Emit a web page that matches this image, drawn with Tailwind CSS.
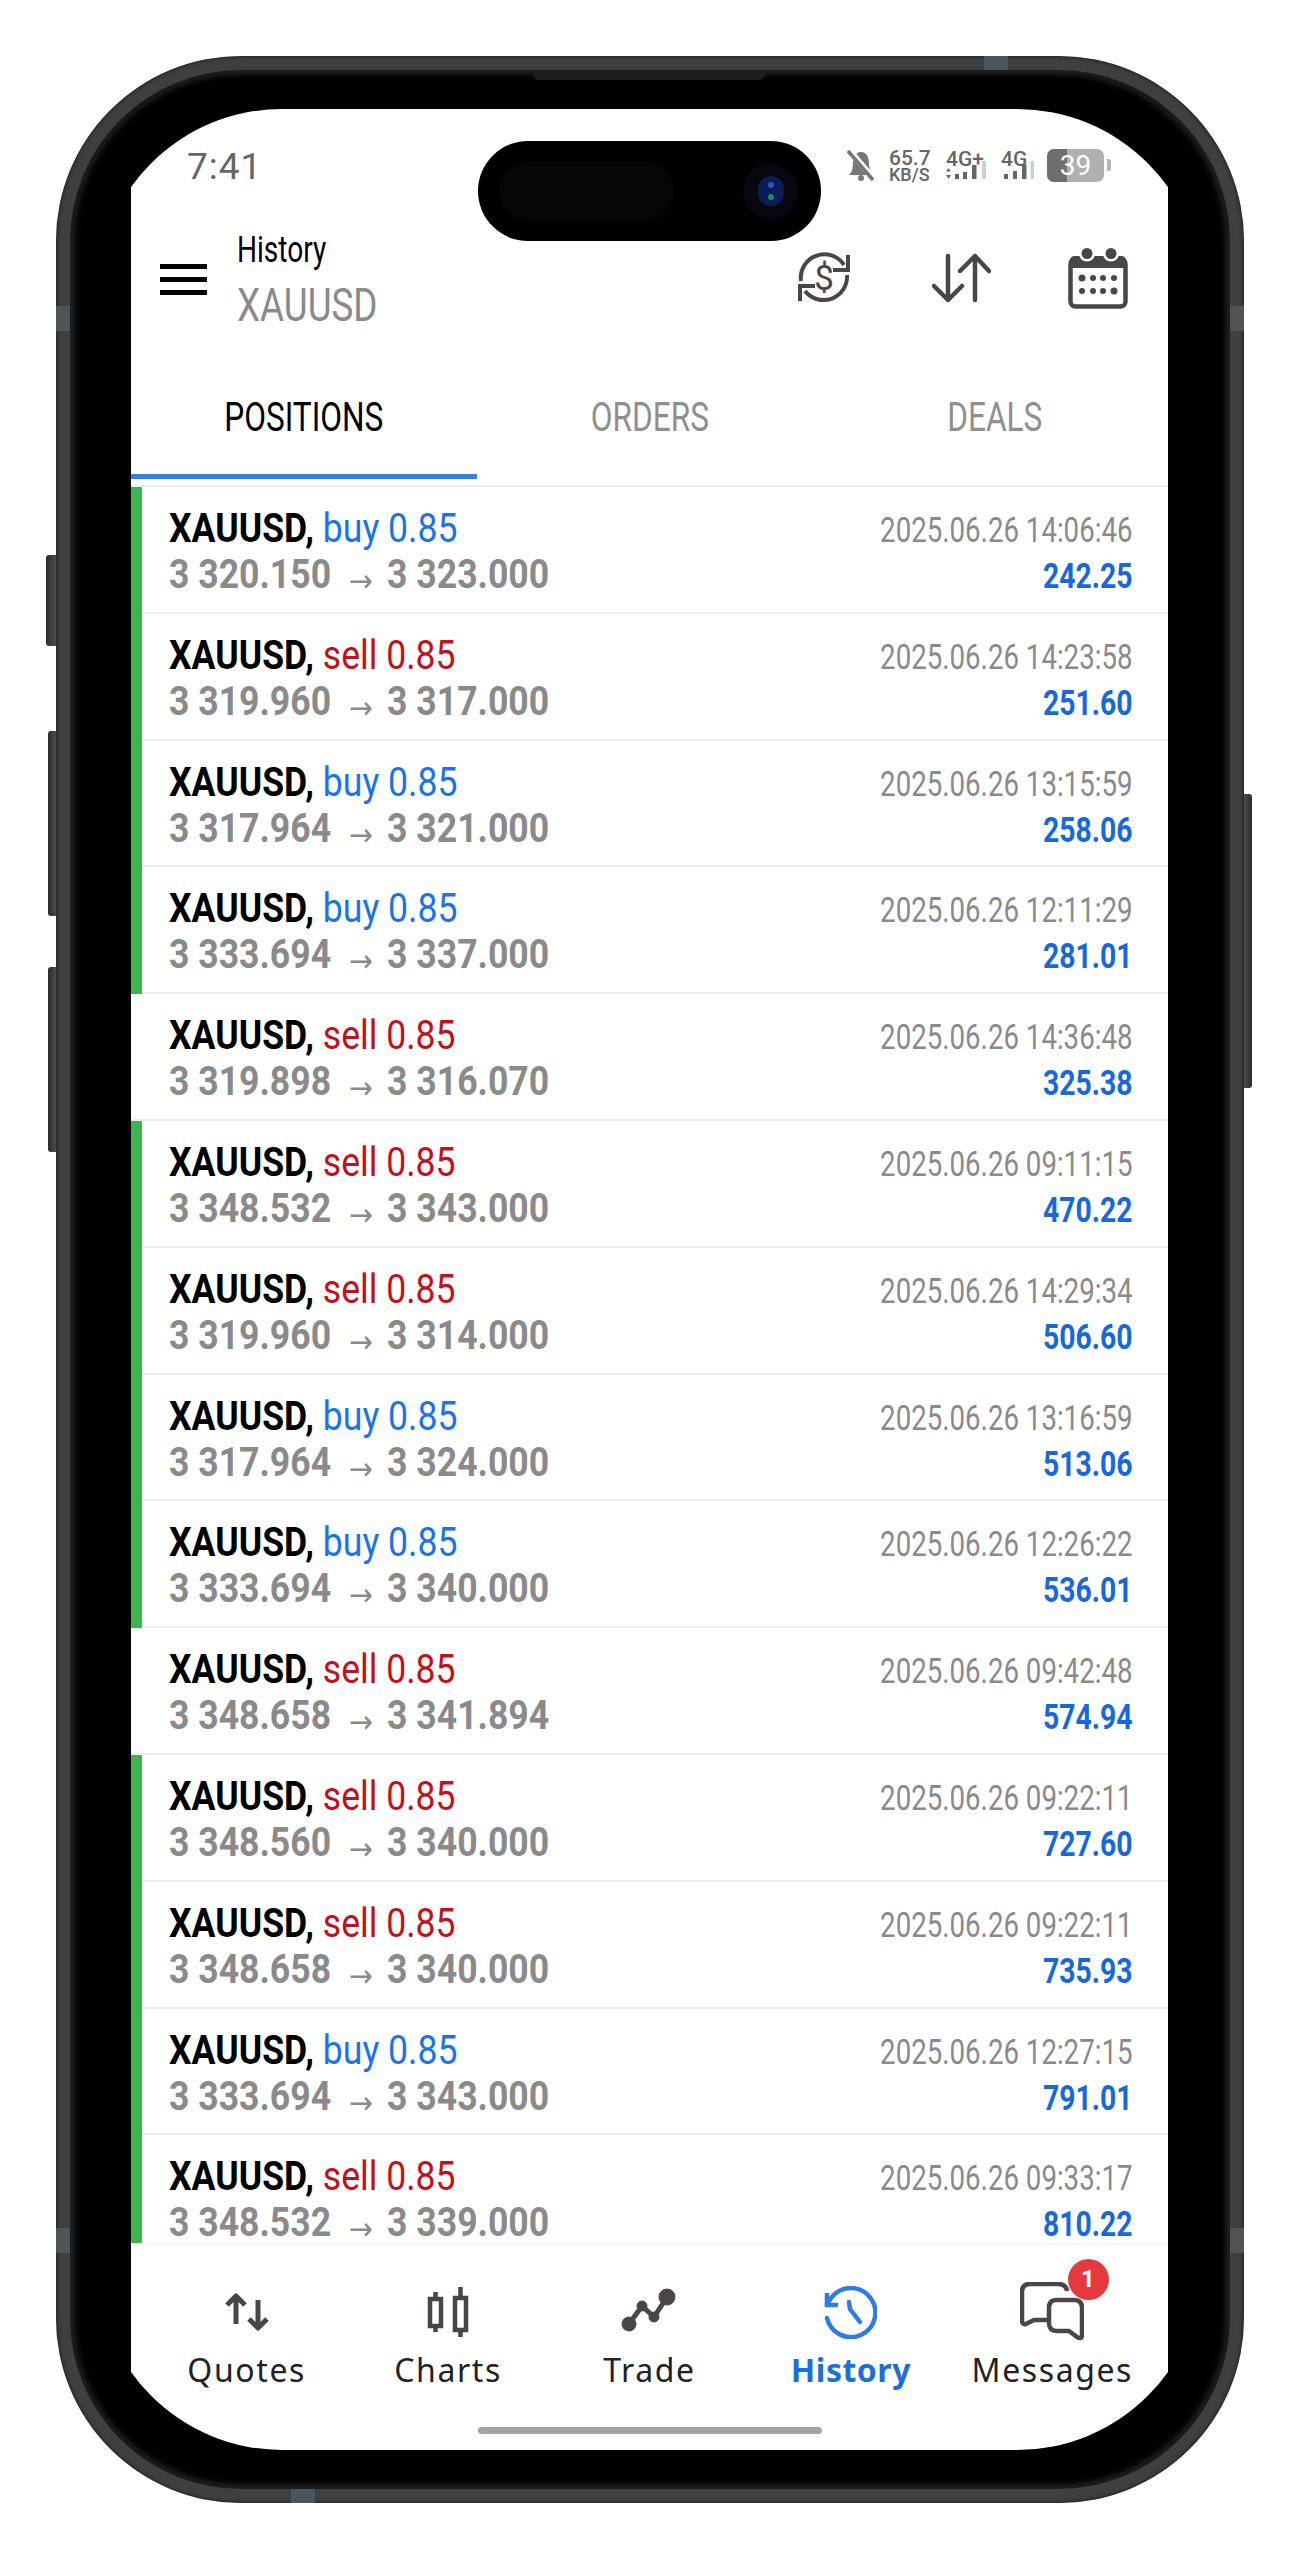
<!DOCTYPE html>
<html lang="en">
<head>
  <meta charset="UTF-8" />
  <meta name="viewport" content="width=device-width, initial-scale=1.0" />
  <title>History - XAUUSD</title>
  <script src="https://cdn.jsdelivr.net/npm/@tailwindcss/browser@4"></script>
</head>
<body class="bg-white font-[Roboto,sans-serif] overflow-hidden h-[2560px]">
  <!-- Phone frame -->
  <div class="relative mt-[56px] ml-[56px] w-[1188px] h-[2447px] rounded-[185px] bg-[#3d3f40] p-[14px] shadow-[inset_0_0_4px_#141516]">
    <!-- side buttons -->
    <div class="absolute left-[-10px] top-[499px] w-[10px] h-[91px] rounded-l-[3px] bg-gradient-to-r from-[#2a2c2d] to-[#4a4c4e]"></div>
    <div class="absolute left-[-8px] top-[675px] w-[8px] h-[185px] rounded-l-[3px] bg-gradient-to-r from-[#2a2c2d] to-[#4a4c4e]"></div>
    <div class="absolute left-[-8px] top-[911px] w-[8px] h-[185px] rounded-l-[3px] bg-gradient-to-r from-[#2a2c2d] to-[#4a4c4e]"></div>
    <div class="absolute right-[-8px] top-[738px] w-[8px] h-[294px] rounded-r-[3px] bg-gradient-to-l from-[#2a2c2d] to-[#4a4c4e]"></div>
    <!-- antenna bands -->
    <div class="absolute left-[928px] top-0 w-[24px] h-[14px] bg-[#505456]"></div>
    <div class="absolute left-[235px] bottom-0 w-[24px] h-[14px] bg-[#505456]"></div>
    <div class="absolute left-0 top-[250px] w-[14px] h-[25px] bg-[#505456]"></div>
    <div class="absolute right-0 top-[250px] w-[14px] h-[25px] bg-[#505456]"></div>
    <div class="absolute left-0 top-[2172px] w-[14px] h-[25px] bg-[#505456]"></div>
    <div class="absolute right-0 top-[2172px] w-[14px] h-[25px] bg-[#505456]"></div>

    <div class="relative h-full rounded-[171px] bg-black pt-[37px] pb-[37px] pl-[59px] pr-[60px] border-2 border-[#1b1d1e] shadow-[inset_0_0_9px_#3a3a3a]">
      <!-- speaker -->
      <div class="absolute left-[461px] top-0 w-[232px] h-[8px] rounded-b-[6px] bg-[#1c1d1e]"></div>

      <!-- straight crop of the screen -->
      <div class="relative h-full overflow-hidden">
        <div class="relative h-full -mx-[34px] px-[34px] rounded-[185px] overflow-hidden bg-white flex flex-col">

          <!-- Dynamic island -->
          <div class="absolute left-[381px] top-[32px] w-[343px] h-[100px] rounded-full bg-black flex items-center">
            <div class="ml-[21px] w-[175px] h-[59px] rounded-full bg-[#060606]"></div>
            <div class="ml-[69px] w-[55px] h-[55px] rounded-full bg-[#0a0610] flex items-center justify-center">
              <div class="w-[26px] h-[30px] rounded-full bg-[#0c1c55] flex flex-col items-center justify-center gap-[6px]">
                <div class="w-[6px] h-[6px] rounded-full bg-[#3550c0]"></div>
                <div class="w-[6px] h-[6px] rounded-full bg-[#1c8a66]"></div>
              </div>
            </div>
          </div>

          <!-- Status bar -->
          <div class="h-[115px] shrink-0 flex justify-between text-[#666666]">
            <div class="pl-[56px] pt-[38px] text-[37px] leading-[40px] tracking-[1px]">7:41</div>
            <div class="flex items-start pr-[57px] pt-[40px]">
              <svg class="w-[28px] h-[33px]" viewBox="0 0 28 33">
                <path d="M14 3C8 3 6 9 6 15L5 22L2 26H26L23 22L22 15C22 9 20 3 14 3Z" fill="#777"/>
                <circle cx="14" cy="29" r="3" fill="#777"/>
                <path d="M2 1L26 29" stroke="#fff" stroke-width="6"/>
                <path d="M1 2L26 31" stroke="#777" stroke-width="3.5"/>
              </svg>
              <div class="ml-[14px] w-[39px] font-medium">
                <div class="text-[21px] leading-[18px]">65.7</div>
                <div class="text-[18px] leading-[15px] whitespace-nowrap">KB/S</div>
              </div>
              <div class="ml-[18px] w-[40px] font-medium">
                <div class="pt-[4px] text-[21px] leading-[12px]">4G+</div>
                <svg class="mt-[-4px] w-[40px] h-[18px]" viewBox="0 0 40 18" fill="#666666">
                  <path d="M2.5 7L5 10.5H0ZM2.5 18L0 14H5Z"/>
                  <rect x="9" y="13" width="4" height="5"/>
                  <rect x="17" y="11" width="4" height="7"/>
                  <rect x="26" y="4" width="4.5" height="14"/>
                  <rect x="36" y="0" width="4" height="18" fill="#cfcfcf"/>
                </svg>
              </div>
              <div class="ml-[15px] w-[33px] font-medium">
                <div class="pt-[4px] text-[21px] leading-[12px]">4G</div>
                <svg class="mt-[-4px] ml-[3px] w-[30px] h-[18px]" viewBox="0 0 30 18" fill="#666666">
                  <rect x="0" y="13" width="4" height="5"/>
                  <rect x="9" y="10" width="4" height="8"/>
                  <rect x="18" y="4" width="4.5" height="14"/>
                  <rect x="26.500" y="0" width="3.5" height="18" fill="#cfcfcf"/>
                </svg>
              </div>
              <div class="ml-[13px] w-[57px] h-[33px] rounded-[7px] overflow-hidden flex bg-[#b0b0b0] relative">
                <div class="w-[20px] bg-[#6e6e6e]"></div>
                <div class="absolute inset-0 text-center text-white text-[28px] leading-[33px]">39</div>
              </div>
              <div class="ml-[3px] mt-[10px] w-[4px] h-[12px] rounded-r-[2px] bg-[#b5b5b5]"></div>
            </div>
          </div>

          <!-- Header -->
          <div class="h-[110px] shrink-0 flex items-center">
            <div class="ml-[29px] w-[47px] flex flex-col gap-[8px]">
              <div class="h-[5px] bg-black"></div>
              <div class="h-[5px] bg-black"></div>
              <div class="h-[5px] bg-black"></div>
            </div>
            <div class="ml-[30px] flex-1 min-w-0">
              <div class="origin-left scale-x-[.78] whitespace-nowrap text-[36px] leading-[52px] text-black">History</div>
              <div class="origin-left scale-x-[.8] whitespace-nowrap text-[46px] leading-[58px] text-[#8a8a8a]">XAUUSD</div>
            </div>
            <div class="flex items-center pr-[40px] -mt-[2px]">
              <!-- swap -->
              <svg class="w-[56px] h-[56px]" viewBox="0 0 56 56" fill="none" stroke="#4a4646" stroke-width="4">
                <path d="M5 31A23.500 23.500 0 0 1 48 15"/>
                <path d="M52 5V20H37"/>
                <path d="M51 25A23.500 23.500 0 0 1 9 41"/>
                <path d="M4 51V36H19"/>
                <text x="28" y="40" text-anchor="middle" font-family="Roboto" font-size="35" fill="#4a4646" stroke="none">$</text>
              </svg>
              <!-- sort -->
              <svg class="ml-[80px] w-[59px] h-[50px]" viewBox="0 0 59 50" fill="none" stroke="#4a4646" stroke-width="4.500" stroke-linecap="round" stroke-linejoin="round">
                <path d="M16 3V47M2 33L16 47L30 33"/>
                <path d="M43 47V3M28 18L43 3L57 18"/>
              </svg>
              <!-- calendar -->
              <svg class="ml-[77px] w-[60px] h-[62px]" viewBox="0 0 60 62">
                <rect x="2.500" y="12" width="55" height="47.500" rx="5" fill="none" stroke="#4a4646" stroke-width="4.500"/>
                <path d="M2 21V14Q2 9 7 9H53Q58 9 58 14V21Z" fill="#4a4646"/>
                <circle cx="19" cy="6.500" r="8" fill="#fff"/>
                <circle cx="43" cy="6.500" r="8" fill="#fff"/>
                <circle cx="19" cy="6.500" r="5.500" fill="#4a4646"/>
                <circle cx="43" cy="6.500" r="5.500" fill="#4a4646"/>
                <g fill="#4a4646">
                  <circle cx="14" cy="31" r="3.500"/><circle cx="25" cy="31" r="3"/><circle cx="35" cy="31" r="3"/><circle cx="46" cy="31" r="3"/>
                  <circle cx="14" cy="44" r="3"/><circle cx="25" cy="44" r="3"/><circle cx="35" cy="44" r="3"/><circle cx="46" cy="44" r="3.500"/>
                </g>
              </svg>
            </div>
          </div>

          <!-- Tabs -->
          <div class="shrink-0 pb-[6px] border-b-2 border-[#ececec]">
            <div class="grid grid-cols-3 h-[145px] text-center text-[40px] leading-[48px] text-[#8f8f8f]">
              <div class="pt-[60px] border-b-[5px] border-[#2f80ed] text-black"><div class="scale-x-[.79] whitespace-nowrap">POSITIONS</div></div>
              <div class="pt-[60px]"><div class="scale-x-[.79] whitespace-nowrap">ORDERS</div></div>
              <div class="pt-[60px]"><div class="scale-x-[.79] whitespace-nowrap">DEALS</div></div>
            </div>
          </div>

          <!-- Positions -->
          <div id="rows" class="flex-1 min-h-0 overflow-hidden"></div>

          <!-- Bottom navigation -->
          <div class="h-[207px] shrink-0 border-t border-[#f2f2f2] font-['Noto_Sans',sans-serif] text-[32px] leading-[44px] text-[#222] tracking-[1.6px]">
            <div class="grid grid-cols-5 px-[15px] pt-[38px] text-center">
              <div>
                <div class="h-[60px] flex items-center justify-center">
                  <svg class="w-[44px] h-[38px]" viewBox="0 0 44 38" fill="none" stroke="#4a4646" stroke-width="5" stroke-linejoin="round">
                    <path d="M11 31V3M2 12L11 3L20 12"/>
                    <path d="M33 7V35M24 26L33 35L42 26"/>
                  </svg>
                </div>
                <div class="mt-[6px]">Quotes</div>
              </div>
              <div>
                <div class="h-[60px] flex items-center justify-center">
                  <svg class="w-[44px] h-[50px]" viewBox="0 0 44 50" fill="none" stroke="#4a4646" stroke-width="4.500">
                    <rect x="4" y="12" width="11" height="27"/>
                    <path d="M9.500 5V12M9.500 39V45"/>
                    <rect x="29" y="11" width="11" height="32"/>
                    <path d="M34.500 0V11M34.500 43V50"/>
                  </svg>
                </div>
                <div class="mt-[6px]">Charts</div>
              </div>
              <div>
                <div class="h-[60px] flex items-center justify-center">
                  <svg class="w-[60px] h-[50px]" viewBox="0 0 60 50" fill="#4a4646" stroke="#4a4646">
                    <path d="M10 37L23 19L35 30L48 10" fill="none" stroke-width="5"/>
                    <circle cx="10" cy="37" r="7"/><circle cx="23" cy="19" r="5"/><circle cx="35" cy="30" r="5"/><circle cx="48" cy="10" r="8"/>
                  </svg>
                </div>
                <div class="mt-[6px]">Trade</div>
              </div>
              <div class="text-[#1a6fd8] font-bold tracking-[0.5px]">
                <div class="h-[60px] flex items-center justify-center">
                  <svg class="w-[53px] h-[53px]" viewBox="0 0 53 53" fill="none" stroke="#2f7de1" stroke-width="4.500" stroke-linecap="round">
                    <path d="M3 32A24.500 24.500 0 1 0 8 11L3 18"/>
                    <path d="M3 7V19H14" stroke-linecap="butt" stroke-width="4.500"/>
                    <path d="M25 16L26 23L36 36"/>
                  </svg>
                </div>
                <div class="mt-[6px]">History</div>
              </div>
              <div>
                <div class="h-[60px] flex items-center justify-center">
                  <div class="relative w-[64px] h-[60px]">
                    <svg class="w-[64px] h-[60px]" viewBox="0 0 64 60" fill="none" stroke="#4a4646" stroke-width="4.500" stroke-linejoin="round">
                      <path d="M29 38H14L6 42Q2 43 2 38V10Q2 2 10 2H38Q46 2 47 9"/>
                      <path d="M36 18H54Q62 18 62 26V53Q62 58 57 55L49 49H37Q29 49 29 41V26Q29 18 36 18Z"/>
                    </svg>
                    <div class="absolute left-[48px] top-[-23px] w-[41px] h-[41px] rounded-full bg-[#e5393f] text-white text-[24px] leading-[41px] font-bold font-[Roboto,sans-serif]">1</div>
                  </div>
                </div>
                <div class="mt-[6px]">Messages</div>
              </div>
            </div>
            <div class="mt-[35px] mx-auto w-[344px] h-[7px] rounded-full bg-[#a3a3a3]"></div>
          </div>
        </div>
      </div>
    </div>
  </div>

  <script>
    // Closed positions: side, open, close, time, profit, green marker
    const positions = [
      ["buy", "3 320.150", "3 323.000", "14:06:46", "242.25", true],
      ["sell", "3 319.960", "3 317.000", "14:23:58", "251.60", true],
      ["buy", "3 317.964", "3 321.000", "13:15:59", "258.06", true],
      ["buy", "3 333.694", "3 337.000", "12:11:29", "281.01", true],
      ["sell", "3 319.898", "3 316.070", "14:36:48", "325.38", false],
      ["sell", "3 348.532", "3 343.000", "09:11:15", "470.22", true],
      ["sell", "3 319.960", "3 314.000", "14:29:34", "506.60", true],
      ["buy", "3 317.964", "3 324.000", "13:16:59", "513.06", true],
      ["buy", "3 333.694", "3 340.000", "12:26:22", "536.01", true],
      ["sell", "3 348.658", "3 341.894", "09:42:48", "574.94", false],
      ["sell", "3 348.560", "3 340.000", "09:22:11", "727.60", true],
      ["sell", "3 348.658", "3 340.000", "09:22:11", "735.93", true],
      ["buy", "3 333.694", "3 343.000", "12:27:15", "791.01", true],
      ["sell", "3 348.532", "3 339.000", "09:33:17", "810.22", true],
    ];

    document.getElementById("rows").innerHTML = positions.map(([side, open, close, time, profit, win]) => `
      <div class="flex h-[126.8px]">
        <div class="w-[11px] shrink-0 ${win ? "bg-[#3cb54f]" : "border-b-2 border-[#eeeeee]"}"></div>
        <div class="flex-1 min-w-0 flex justify-between pl-[27px] pr-[36px] border-b-2 border-[#eeeeee]">
          <div class="pt-[19px] text-[40px] leading-[46px]">
            <div class="origin-left scale-x-[.89] whitespace-nowrap"><span class="font-bold text-black">XAUUSD,</span> <span class="${side === "buy" ? "text-[#1a73e8]" : "text-[#c40f1c]"}">${side} 0.85</span></div>
            <div class="origin-left scale-x-[.89] whitespace-nowrap font-bold text-[#8a8a8a]">${open}<span class="ml-[20px] mr-[16px] font-normal font-['DejaVu_Sans'] text-[32px] align-[-4px]">→</span>${close}</div>
          </div>
          <div class="pt-[21px] text-right text-[35px] leading-[46px]">
            <div class="origin-right scale-x-[.79] whitespace-nowrap text-[#8a8a8a]">2025.06.26 ${time}</div>
            <div class="origin-right scale-x-[.81] whitespace-nowrap font-bold text-[#1668dc]">${profit}</div>
          </div>
        </div>
      </div>`).join("");
  </script>
</body>
</html>
